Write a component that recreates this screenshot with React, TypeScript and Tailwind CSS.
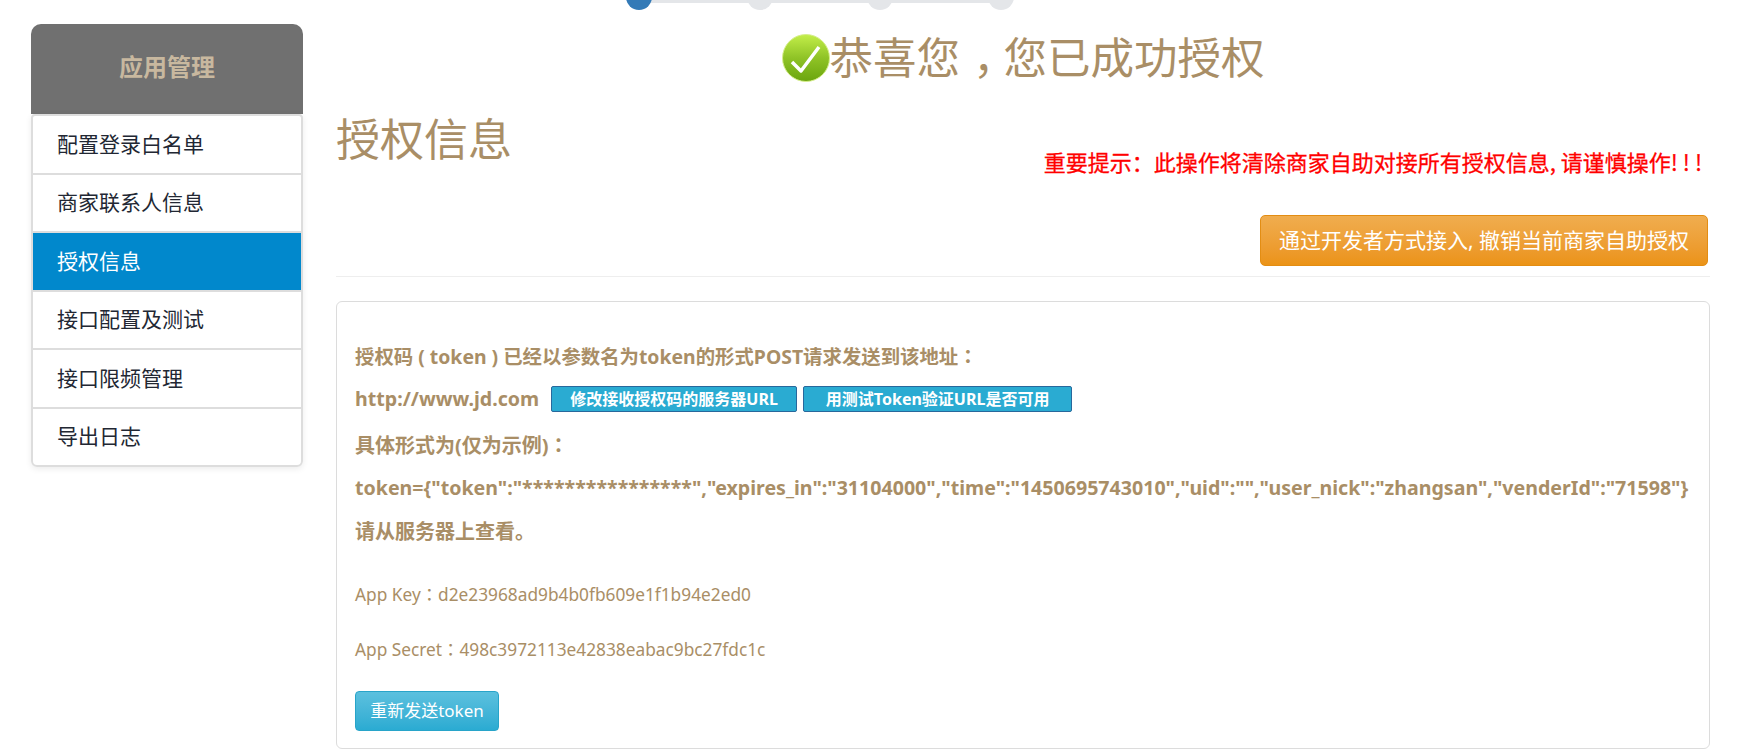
import React from 'react';

const menuItems = ['配置登录白名单', '商家联系人信息', '授权信息', '接口配置及测试', '接口限频管理', '导出日志'];

const JP_FONT = { fontFamily: '"Noto Sans CJK JP", sans-serif' };

// the fullwidth colon sits in the middle of its cell in the reference
const Colon = () => <span style={JP_FONT}>：</span>;

const CheckBadge = () => (
  <svg width="48" height="50" viewBox="0 0 48 50" className="shrink-0">
    <defs>
      <linearGradient id="okGreen" x1="0" y1="0" x2="0" y2="1">
        <stop offset="0" stopColor="#c3ee4a" />
        <stop offset="0.5" stopColor="#8fc326" />
        <stop offset="1" stopColor="#6ba50e" />
      </linearGradient>
    </defs>
    <circle cx="24" cy="25" r="23.5" fill="url(#okGreen)" stroke="#d6ee8c" strokeWidth="1" />
    <path d="M10 29 L19 38 L37 14" fill="none" stroke="#fff" strokeWidth="3.5" strokeLinejoin="round" />
  </svg>
);

const Stepper = () => (
  <div className="h-[10px] overflow-hidden ml-[290px] w-[388px] relative">
    <div className="absolute top-0 left-[10px] right-[10px] h-[3px] bg-[#e4e6e9]" />
    <div className="relative flex justify-between -mt-[16px]">
      <div className="w-[26px] h-[26px] rounded-full bg-[#337ab7]" />
      <div className="w-[26px] h-[26px] rounded-full bg-[#e4e6e9]" />
      <div className="w-[26px] h-[26px] rounded-full bg-[#e4e6e9]" />
      <div className="w-[26px] h-[26px] rounded-full bg-[#e4e6e9]" />
    </div>
  </div>
);

const Sidebar = () => (
  <aside className="w-[272px] shrink-0 mt-[24px]">
    <div className="h-[90px] pb-[4px] rounded-t-[10px] bg-[#707070] flex items-center justify-center">
      <span className="text-[24px] font-bold text-[#c8b89f]">应用管理</span>
    </div>
    <ul className="border-2 border-[#dddddd] rounded-b-[6px] rounded-t-[4px] shadow-[0_2px_6px_rgba(0,0,0,0.08)]">
      {menuItems.map((item, index) => (
        <li
          key={item}
          className={
            'h-[58.6px] last:h-[56px] pl-[24px] flex items-center text-[21px] ' +
            (index < menuItems.length - 1 ? 'border-b-2 border-[#dddddd] ' : '') +
            (item === '授权信息' ? 'bg-[#0188cc] text-white' : 'text-[#222733]')
          }
        >
          {item}
        </li>
      ))}
    </ul>
  </aside>
);

const Panel = () => (
  <div className="mt-[24px] h-[448px] w-[1374px] border border-[#dcdcdc] rounded-[6px] pl-[18px] pt-[41px] text-[#a98e66]">
    <div className="font-bold text-[19.4px] leading-[26px]">授权码 ( token ) 已经以参数名为token的形式POST请求发送到该地址<Colon /></div>
    <div className="font-bold text-[19.6px] leading-[26px] mt-[16px] flex items-center">
      <span>http://www.jd.com</span>
      <button className="ml-[12px] w-[246px] h-[26px] rounded-[2px] bg-[#2aabd2] border border-[#28689c] text-white text-[16px] leading-none">修改接收授权码的服务器URL</button>
      <button className="ml-[6px] w-[269px] h-[26px] rounded-[2px] bg-[#2aabd2] border border-[#28689c] text-white text-[16px] leading-none">用测试Token验证URL是否可用</button>
    </div>
    <div className="font-bold text-[20px] leading-[26px] mt-[20px]">具体形式为(仅为示例)<Colon /></div>
    <div className="font-bold text-[19.6px] leading-[26px] mt-[16px] whitespace-nowrap">{'token={"token":"****************","expires_in":"31104000","time":"1450695743010","uid":"","user_nick":"zhangsan","venderId":"71598"}'}</div>
    <div className="font-bold text-[20px] leading-[26px] mt-[18px]">请从服务器上查看。</div>
    <div className="text-[17.3px] leading-[24px] mt-[37px]">App Key<Colon />d2e23968ad9b4b0fb609e1f1b94e2ed0</div>
    <div className="text-[17.3px] leading-[24px] mt-[30px]">App Secret<Colon />498c3972113e42838eabac9bc27fdc1c</div>
    <button className="mt-[29px] h-[40px] w-[144px] rounded-[4px] border border-[#28a4c9] bg-gradient-to-b from-[#5bc0de] to-[#2aabd2] text-white text-[17px]">重新发送token</button>
  </div>
);

export default function App() {
  return (
    <div
      className="w-[1752px] h-[750px] overflow-hidden bg-white flex pl-[31px]"
      style={{ fontFamily: '"Noto Sans", "Noto Sans CJK SC", sans-serif' }}
    >
      <Sidebar />
      <main className="ml-[33px] w-[1374px]">
        <Stepper />
        <div className="flex justify-center items-center mt-[23px] h-[50px]">
          <CheckBadge />
          <span className="text-[43.5px] leading-none text-[#a98e66]">
            恭喜您<span className="ml-[0.3em] tracking-[-0.3em]">，</span>您已成功授权
          </span>
        </div>
        <div className="flex justify-between mt-[28px]">
          <h1 className="text-[44px] leading-[56px] text-[#a98e66]">授权信息</h1>
          <p
            className="text-[22px] text-[#ff0000] mt-[34px] pr-[3px] whitespace-nowrap [-webkit-text-stroke:0.3px_#ff0000]"
            style={{ fontFamily: '"Noto Sans CJK SC", sans-serif' }}
          >
            重要提示：此操作将清除商家自助对接所有授权信息, 请谨慎操作<span className="tracking-[5px]">!!!</span>
          </p>
        </div>
        <div className="flex justify-end mt-[37px] pr-[2px]">
          <button className="w-[448px] h-[51px] rounded-[5px] border border-[#e38d13] bg-gradient-to-b from-[#f0ad4e] to-[#eb9316] text-white text-[21px]">
            通过开发者方式接入, 撤销当前商家自助授权
          </button>
        </div>
        <hr className="mt-[10px] border-[#eeeeee]" />
        <Panel />
      </main>
    </div>
  );
}
